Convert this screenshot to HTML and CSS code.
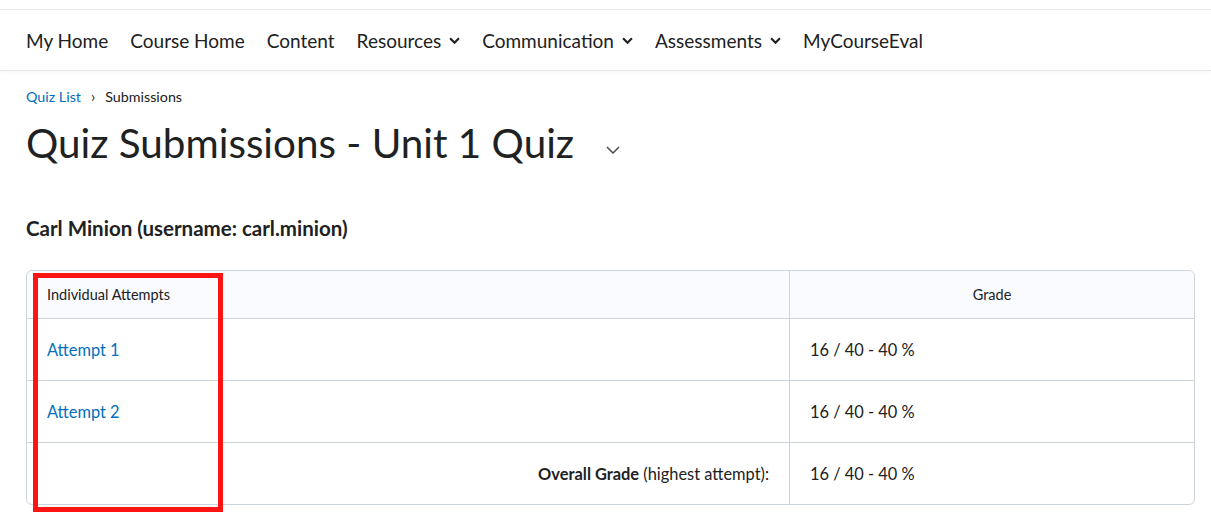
FILE: index.html
```html
<!DOCTYPE html>
<html lang="en">
<head>
    <meta charset="UTF-8">
    <title>Quiz Submissions - Unit 1 Quiz</title>
    <link rel="stylesheet" href="styles.css">
</head>
<body>
    <div class="topbar"></div>
    <nav class="navbar">
        <a class="nav-item">My Home</a>
        <a class="nav-item">Course Home</a>
        <a class="nav-item">Content</a>
        <a class="nav-item">Resources
            <svg class="nav-chevron" viewBox="0 0 10 6"><path d="M1 1l4 4 4-4" /></svg>
        </a>
        <a class="nav-item">Communication
            <svg class="nav-chevron" viewBox="0 0 10 6"><path d="M1 1l4 4 4-4" /></svg>
        </a>
        <a class="nav-item">Assessments
            <svg class="nav-chevron" viewBox="0 0 10 6"><path d="M1 1l4 4 4-4" /></svg>
        </a>
        <a class="nav-item">MyCourseEval</a>
    </nav>

    <main class="page">
        <div class="breadcrumbs">
            <a class="crumb-link">Quiz List</a>
            <span class="crumb-sep">&rsaquo;</span>
            <span>Submissions</span>
        </div>
        <div class="title-row">
            <h1 class="page-title">Quiz Submissions - Unit 1 Quiz</h1>
            <svg class="title-chevron" viewBox="0 0 14 8"><path d="M1 1l6 6 6-6" /></svg>
        </div>

        <h2 class="user-name">Carl Minion (username: carl.minion)</h2>

        <div class="table-wrap">
            <table class="attempts">
                <thead>
                    <tr>
                        <th class="col-attempt">Individual Attempts</th>
                        <th class="col-grade">Grade</th>
                    </tr>
                </thead>
                <tbody>
                    <tr>
                        <td><a class="attempt-link">Attempt 1</a></td>
                        <td class="grade">16 / 40 - 40 %</td>
                    </tr>
                    <tr>
                        <td><a class="attempt-link">Attempt 2</a></td>
                        <td class="grade">16 / 40 - 40 %</td>
                    </tr>
                    <tr>
                        <td class="overall"><strong>Overall Grade</strong> (highest attempt):</td>
                        <td class="grade">16 / 40 - 40 %</td>
                    </tr>
                </tbody>
            </table>
            <div class="highlight"></div>
        </div>
    </main>
</body>
</html>
```

FILE: styles.css
```css
body {
    margin: 0;
    font-family: Lato, "Open Sans", sans-serif;
    color: #202122;
    background-color: #ffffff;
}
.topbar {
    height: 9px;
    border-bottom: 1px solid #e3e6ea;
}
.navbar {
    display: flex;
    align-items: center;
    gap: 22px;
    height: 60px;
    padding: 0 26px;
    border-bottom: 1px solid #e3e6ea;
    box-shadow: 0 2px 4px rgba(0, 0, 0, 0.03);
}
.nav-item {
    display: flex;
    align-items: center;
    gap: 8px;
    font-size: 19px;
    color: #202122;
    cursor: pointer;
}
.nav-chevron {
    width: 11px;
    height: 7px;
    fill: none;
    stroke: #202122;
    stroke-width: 2;
}
.page {
    padding: 0 16px 30px 26px;
}
.breadcrumbs {
    display: flex;
    align-items: center;
    gap: 10px;
    margin-top: 17px;
    font-size: 14.3px;
    line-height: 17px;
    color: #202122;
}
.crumb-link {
    color: #006fbf;
}
.crumb-sep {
    font-size: 15px;
}
.title-row {
    display: flex;
    align-items: center;
    margin-top: 13px;
}
.page-title {
    margin: 0;
    font-size: 40.4px;
    font-weight: 400;
    line-height: 50px;
}
.title-chevron {
    width: 14px;
    height: 8px;
    margin: 13px 0 0 32px;
    fill: none;
    stroke: #494c4e;
    stroke-width: 1.5;
}
.user-name {
    margin: 48px 0 0;
    font-size: 20.5px;
    font-weight: 700;
    line-height: 24px;
}
.table-wrap {
    position: relative;
    margin-top: 30px;
}
.attempts {
    width: 100%;
    border-collapse: separate;
    border-spacing: 0;
    border: 1px solid #cdd5dc;
    border-radius: 6px;
    font-size: 16.4px;
}
.attempts th {
    height: 47px;
    padding: 0 20px;
    font-size: 14.5px;
    font-weight: 400;
    background-color: #f9fbff;
    border-bottom: 1px solid #cdd5dc;
}
.attempts thead th:first-child {
    border-top-left-radius: 6px;
}
.attempts thead th:last-child {
    border-top-right-radius: 6px;
}
.col-attempt {
    text-align: left;
}
.col-grade {
    width: 364px;
    text-align: center;
    border-left: 1px solid #cdd5dc;
}
.attempts td {
    height: 61px;
    padding: 0 20px;
    border-bottom: 1px solid #cdd5dc;
}
.attempts tr:last-child td {
    border-bottom: none;
}
.attempts td.grade {
    border-left: 1px solid #cdd5dc;
}
.attempt-link {
    color: #006fbf;
    cursor: pointer;
}
.overall {
    text-align: right;
}
.highlight {
    position: absolute;
    left: 7px;
    top: 3px;
    width: 180px;
    height: 229px;
    border: 5px solid #ff1414;
}
```
